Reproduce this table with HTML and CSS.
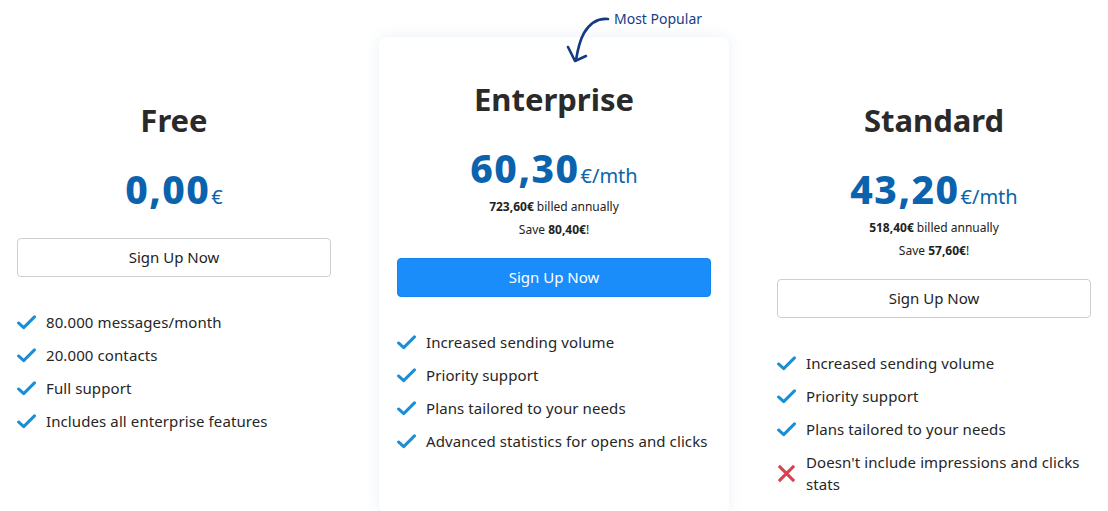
FILE: index.html
```html
<!DOCTYPE html>
<html lang="en">
<head>
<meta charset="utf-8">
<title>Pricing</title>
<link rel="stylesheet" href="styles.css">
</head>
<body>
<main class="pricing">
  <section class="plan plan--free">
    <h2 class="plan__title">Free</h2>
    <p class="price"><span class="price__amount">0,00</span><span class="price__unit">€</span></p>
    <a class="btn btn--outline" href="#">Sign Up Now</a>
    <ul class="features">
      <li class="feature"><svg class="icon icon--check" viewBox="0 0 20 16"><path d="M1.5 8.5 L7 13.5 L18.5 2"/></svg><span>80.000 messages/month</span></li>
      <li class="feature"><svg class="icon icon--check" viewBox="0 0 20 16"><path d="M1.5 8.5 L7 13.5 L18.5 2"/></svg><span>20.000 contacts</span></li>
      <li class="feature"><svg class="icon icon--check" viewBox="0 0 20 16"><path d="M1.5 8.5 L7 13.5 L18.5 2"/></svg><span>Full support</span></li>
      <li class="feature"><svg class="icon icon--check" viewBox="0 0 20 16"><path d="M1.5 8.5 L7 13.5 L18.5 2"/></svg><span>Includes all enterprise features</span></li>
    </ul>
  </section>

  <section class="plan plan--featured">
    <div class="badge">
      <svg class="badge__arrow" viewBox="0 0 50 50"><path d="M47 5 C37 4 29 9 23 19 C19 26 17 34 15 46"/><path d="M7 33 L14 47 L25 42"/></svg>
      <span class="badge__text">Most Popular</span>
    </div>
    <h2 class="plan__title">Enterprise</h2>
    <p class="price"><span class="price__amount">60,30</span><span class="price__unit">€/mth</span></p>
    <div class="billing">
      <p><strong>723,60€</strong> billed annually</p>
      <p>Save <strong>80,40€</strong>!</p>
    </div>
    <a class="btn btn--primary" href="#">Sign Up Now</a>
    <ul class="features">
      <li class="feature"><svg class="icon icon--check" viewBox="0 0 20 16"><path d="M1.5 8.5 L7 13.5 L18.5 2"/></svg><span>Increased sending volume</span></li>
      <li class="feature"><svg class="icon icon--check" viewBox="0 0 20 16"><path d="M1.5 8.5 L7 13.5 L18.5 2"/></svg><span>Priority support</span></li>
      <li class="feature"><svg class="icon icon--check" viewBox="0 0 20 16"><path d="M1.5 8.5 L7 13.5 L18.5 2"/></svg><span>Plans tailored to your needs</span></li>
      <li class="feature"><svg class="icon icon--check" viewBox="0 0 20 16"><path d="M1.5 8.5 L7 13.5 L18.5 2"/></svg><span>Advanced statistics for opens and clicks</span></li>
    </ul>
  </section>

  <section class="plan plan--standard">
    <h2 class="plan__title">Standard</h2>
    <p class="price"><span class="price__amount">43,20</span><span class="price__unit">€/mth</span></p>
    <div class="billing">
      <p><strong>518,40€</strong> billed annually</p>
      <p>Save <strong>57,60€</strong>!</p>
    </div>
    <a class="btn btn--outline" href="#">Sign Up Now</a>
    <ul class="features">
      <li class="feature"><svg class="icon icon--check" viewBox="0 0 20 16"><path d="M1.5 8.5 L7 13.5 L18.5 2"/></svg><span>Increased sending volume</span></li>
      <li class="feature"><svg class="icon icon--check" viewBox="0 0 20 16"><path d="M1.5 8.5 L7 13.5 L18.5 2"/></svg><span>Priority support</span></li>
      <li class="feature"><svg class="icon icon--check" viewBox="0 0 20 16"><path d="M1.5 8.5 L7 13.5 L18.5 2"/></svg><span>Plans tailored to your needs</span></li>
      <li class="feature feature--no"><svg class="icon icon--cross" viewBox="0 0 20 20"><path d="M2 2 L18 18 M18 2 L2 18"/></svg><span>Doesn't include impressions and clicks stats</span></li>
    </ul>
  </section>
</main>
</body>
</html>
```
FILE: styles.css
```css
* { box-sizing: border-box; }

html, body {
  margin: 0;
  padding: 0;
  background: #ffffff;
}

body {
  font-family: "Noto Sans", "Open Sans", "Liberation Sans", sans-serif;
  color: #262626;
  width: 1108px;
  height: 511px;
  overflow: hidden;
}

.pricing {
  display: flex;
  align-items: flex-start;
  gap: 30px;
  padding-top: 37px;
  margin-left: -1px;
}

.plan {
  width: 350px;
  flex: 0 0 350px;
  padding: 66px 18px 0;
  text-align: center;
  position: relative;
}

.plan--featured {
  padding-top: 45px;
  padding-bottom: 50px;
  background: #ffffff;
  border-radius: 8px;
  box-shadow: 0 0 14px rgba(80, 120, 180, 0.12);
}

.plan__title {
  margin: 0;
  font-size: 31px;
  line-height: 34px;
  font-weight: 700;
  color: #2a2a2a;
}

.price {
  margin: 30px 0 0;
  height: 46px;
  font-size: 39px;
  line-height: 44px;
  color: #0b63ae;
}

.plan--free .price { margin-bottom: 25px; }

.price__amount {
  font-weight: 800;
  letter-spacing: 1.5px;
}

.price__unit {
  font-size: 20px;
  line-height: 1;
  font-weight: 400;
  margin-left: 1px;
}

.billing {
  margin: 3px 0 17px;
  font-size: 12px;
  line-height: 23px;
  color: #222;
}

.billing p { margin: 0; }

.billing strong { font-weight: 700; }

.btn {
  display: block;
  height: 39px;
  line-height: 37px;
  border-radius: 4px;
  font-size: 15px;
  text-decoration: none;
  text-align: center;
}

.btn--outline {
  border: 1px solid #cfcfcf;
  color: #1e1e1e;
  background: #fff;
}

.btn--primary {
  border: 1px solid #1485f0;
  background: #1a8dfb;
  color: #ffffff;
}

.features {
  list-style: none;
  margin: 34px 0 0;
  padding: 0;
  text-align: left;
}

.feature {
  display: flex;
  align-items: center;
  gap: 10px;
  font-size: 15px;
  line-height: 22px;
  letter-spacing: 0.1px;
  color: #262626;
  margin-bottom: 11px;
}

.icon {
  flex: 0 0 auto;
  fill: none;
}

.icon--check {
  width: 19px;
  height: 15px;
  stroke: #1a8fd6;
  stroke-width: 3.2;
  stroke-linecap: round;
  stroke-linejoin: round;
}

.icon--cross {
  width: 19px;
  height: 19px;
  stroke: #d8414e;
  stroke-width: 3.2;
}

.badge {
  position: absolute;
  top: -37px;
  left: 182px;
  display: flex;
  align-items: flex-start;
  gap: 3px;
  color: #163d87;
}

.badge__arrow {
  width: 50px;
  height: 50px;
  margin-top: 14px;
  fill: none;
  stroke: #123a82;
  stroke-width: 2.6;
  stroke-linecap: round;
  stroke-linejoin: round;
}

.badge__text {
  font-size: 14px;
  line-height: 38px;
  white-space: nowrap;
}
```
